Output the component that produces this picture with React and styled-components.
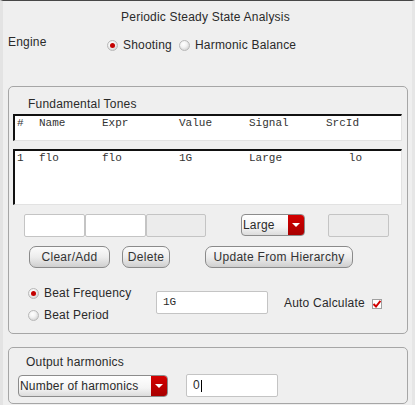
import React from "react";
import styled, { createGlobalStyle, css } from "styled-components";

const Global = createGlobalStyle`
  html, body { margin: 0; padding: 0; background: #efefef; }
  body { font-family: "Liberation Sans", Arial, sans-serif; font-size: 12px; color: #2a2a2a; }
`;

const Window = styled.div`
  width: 415px;
  height: 405px;
  box-sizing: border-box;
  border-top: 1px solid #474747;
  border-left: 3px solid #e3e3e3;
  border-right: 3px solid #e6e6e6;
  background: #efefef;
  overflow: hidden;
  display: flex;
  flex-direction: column;
`;

const Title = styled.div`
  height: 14px;
  line-height: 14px;
  margin-top: 9px;
  padding-right: 4px;
  text-align: center;
  letter-spacing: 0.2px;
`;

const EngineRow = styled.div`
  display: flex;
  align-items: flex-start;
  height: 20px;
  margin-top: 11px;
  padding-left: 5px;
`;

const EngineLabel = styled.span`
  width: 99px;
  line-height: 14px;
  letter-spacing: 0.2px;
`;

const RadioGroup = styled.div`
  display: flex;
  align-items: center;
  gap: 7px;
  margin-top: 3px;
`;

const RadioItem = styled.label`
  display: flex;
  align-items: center;
  gap: 5px;
  line-height: 14px;
  letter-spacing: 0.2px;
`;

const Dot = styled.span`
  width: 11px;
  height: 11px;
  border-radius: 50%;
  box-sizing: border-box;
  border: 1px solid #b8b8b8;
  background: radial-gradient(circle at 40% 35%, #ffffff 0%, #f2f2f2 40%, #c4c4c4 100%);
  display: flex;
  align-items: center;
  justify-content: center;
  ${(p) =>
    p.$on &&
    css`
      &::after {
        content: "";
        width: 5px;
        height: 5px;
        border-radius: 50%;
        background: #c40000;
      }
    `}
`;

const Radio = ({ on, children }) => (
  <RadioItem>
    <Dot $on={on} />
    {children}
  </RadioItem>
);

const Group = styled.div`
  margin-left: 5px;
  width: 400px;
  box-sizing: border-box;
  border: 1px solid #a6a6a6;
  border-radius: 5px;
  display: flex;
  flex-direction: column;
  margin-top: ${(p) => p.$top}px;
  height: ${(p) => p.$h}px;
`;

const GroupLabel = styled.div`
  height: 14px;
  line-height: 14px;
  margin-top: ${(p) => p.$top}px;
  padding-left: ${(p) => p.$left}px;
  letter-spacing: 0.2px;
`;

const TableBox = styled.div`
  margin: ${(p) => p.$top}px 5px 0 4px;
  height: ${(p) => p.$h}px;
  box-sizing: border-box;
  background: #fff;
  border-top: 2px solid #111;
  border-left: 2px solid #111;
  border-right: 1px solid #e2e2e2;
  border-bottom: 1px solid #e2e2e2;
  padding: 0 0 0 2px;
`;

const Row = styled.div`
  display: grid;
  grid-template-columns: 22px 63px 77px 70px 77px 36px;
  font-family: "Liberation Mono", "Courier New", monospace;
  font-size: 11px;
  line-height: 14px;
  color: #333;
  & > span:last-child {
    text-align: ${(p) => (p.$head ? "left" : "right")};
  }
`;

const FieldRow = styled.div`
  display: flex;
  align-items: center;
  margin-top: 8px;
  padding-left: 15px;
  height: 24px;
`;

const Field = styled.div`
  width: ${(p) => p.$w}px;
  height: 23px;
  box-sizing: border-box;
  border: 1px solid #c4c4c4;
  border-radius: 2px;
  background: ${(p) => (p.$off ? "#ececec" : "#fff")};
  margin-left: ${(p) => p.$ml || 0}px;
  font-family: ${(p) => (p.$mono ? '"Liberation Mono", monospace' : '"Liberation Sans", Arial, sans-serif')};
  font-size: ${(p) => (p.$mono ? 11 : 12)}px;
  line-height: 21px;
  padding-left: 6px;
  display: flex;
  align-items: center;
`;

const Caret = styled.span`
  display: inline-block;
  width: 1px;
  height: 12px;
  background: #000;
  margin-left: 1px;
`;

const Select = styled.div`
  width: ${(p) => p.$w}px;
  height: 22px;
  box-sizing: border-box;
  border: 1px solid #8c8c8c;
  border-radius: 4px;
  overflow: hidden;
  display: flex;
  margin-left: ${(p) => p.$ml || 0}px;
  background: linear-gradient(#ffffff, #f4f4f4 60%, #dcdcdc);
`;

const SelectText = styled.span`
  flex: 1;
  line-height: 20px;
  padding-left: 1px;
  letter-spacing: 0.2px;
  white-space: nowrap;
`;

const SelectArrow = styled.span`
  width: 16px;
  background: linear-gradient(#d40000, #a80000);
  display: flex;
  align-items: center;
  justify-content: center;
  &::after {
    content: "";
    border-left: 4px solid transparent;
    border-right: 4px solid transparent;
    border-top: 4px solid #fff;
  }
`;

const Dropdown = ({ w, ml, children }) => (
  <Select $w={w} $ml={ml}>
    <SelectText>{children}</SelectText>
    <SelectArrow />
  </Select>
);

const ButtonRow = styled.div`
  display: flex;
  align-items: center;
  margin-top: 9px;
  padding-left: 20px;
  height: 22px;
`;

const Button = styled.button`
  height: 22px;
  margin-left: ${(p) => p.$ml || 0}px;
  width: ${(p) => p.$w}px;
  padding: 0;
  border: 1px solid #8a8a8a;
  border-radius: 7px;
  background: linear-gradient(#fbfbfb, #ededed 50%, #cfcfcf);
  font-family: "Liberation Sans", Arial, sans-serif;
  font-size: 12px;
  color: #333;
  letter-spacing: 0.3px;
`;

const BeatRow = styled.div`
  display: flex;
  margin-top: 18px;
  padding-left: 19px;
`;

const BeatRadios = styled.div`
  display: flex;
  flex-direction: column;
  gap: 8px;
  width: 128px;
`;

const BeatSide = styled.div`
  display: flex;
  align-items: center;
  height: 23px;
  margin-top: 5px;
`;

const AutoLabel = styled.span`
  margin-left: 16px;
  letter-spacing: 0.2px;
`;

const Check = styled.span`
  width: 10px;
  height: 10px;
  box-sizing: border-box;
  margin-left: 7px;
  border: 1px solid #a0a0a0;
  background: #fff;
  display: flex;
  position: relative;
  top: 1px;
`;

const OutRow = styled.div`
  display: flex;
  align-items: center;
  margin-top: 5px;
  padding-left: 9px;
`;

export default function App() {
  return (
    <>
      <Global />
      <Window>
        <Title>Periodic Steady State Analysis</Title>
        <EngineRow>
          <EngineLabel>Engine</EngineLabel>
          <RadioGroup>
            <Radio on>Shooting</Radio>
            <Radio>Harmonic Balance</Radio>
          </RadioGroup>
        </EngineRow>

        <Group $top={31} $h={248}>
          <GroupLabel $top={10} $left={19}>Fundamental Tones</GroupLabel>
          <TableBox $top={3} $h={27}>
            <Row $head>
              <span>#</span>
              <span>Name</span>
              <span>Expr</span>
              <span>Value</span>
              <span>Signal</span>
              <span>SrcId</span>
            </Row>
          </TableBox>
          <TableBox $top={8} $h={56}>
            <Row>
              <span>1</span>
              <span>flo</span>
              <span>flo</span>
              <span>1G</span>
              <span>Large</span>
              <span>lo</span>
            </Row>
          </TableBox>
          <FieldRow>
            <Field $w={61} />
            <Field $w={61} />
            <Field $w={60} $off />
            <Dropdown w={64} ml={35}>Large</Dropdown>
            <Field $w={61} $off $ml={23} />
          </FieldRow>
          <ButtonRow>
            <Button $w={81}>Clear/Add</Button>
            <Button $w={48} $ml={12}>Delete</Button>
            <Button $w={148} $ml={35}>Update From Hierarchy</Button>
          </ButtonRow>
          <BeatRow>
            <BeatRadios>
              <Radio on>Beat Frequency</Radio>
              <Radio>Beat Period</Radio>
            </BeatRadios>
            <BeatSide>
              <Field $w={112} $mono>1G</Field>
              <AutoLabel>Auto Calculate</AutoLabel>
              <Check>
                <svg width="8" height="8" viewBox="0 0 8 8">
                  <path d="M0.5 4 L3 6.5 L7.5 0.8" fill="none" stroke="#d10000" strokeWidth="2" />
                </svg>
              </Check>
            </BeatSide>
          </BeatRow>
        </Group>

        <Group $top={13} $h={57}>
          <GroupLabel $top={7} $left={17}>Output harmonics</GroupLabel>
          <OutRow>
            <Dropdown w={150}>Number of harmonics</Dropdown>
            <Field $w={92} $ml={18}>
              0<Caret />
            </Field>
          </OutRow>
        </Group>
      </Window>
    </>
  );
}
